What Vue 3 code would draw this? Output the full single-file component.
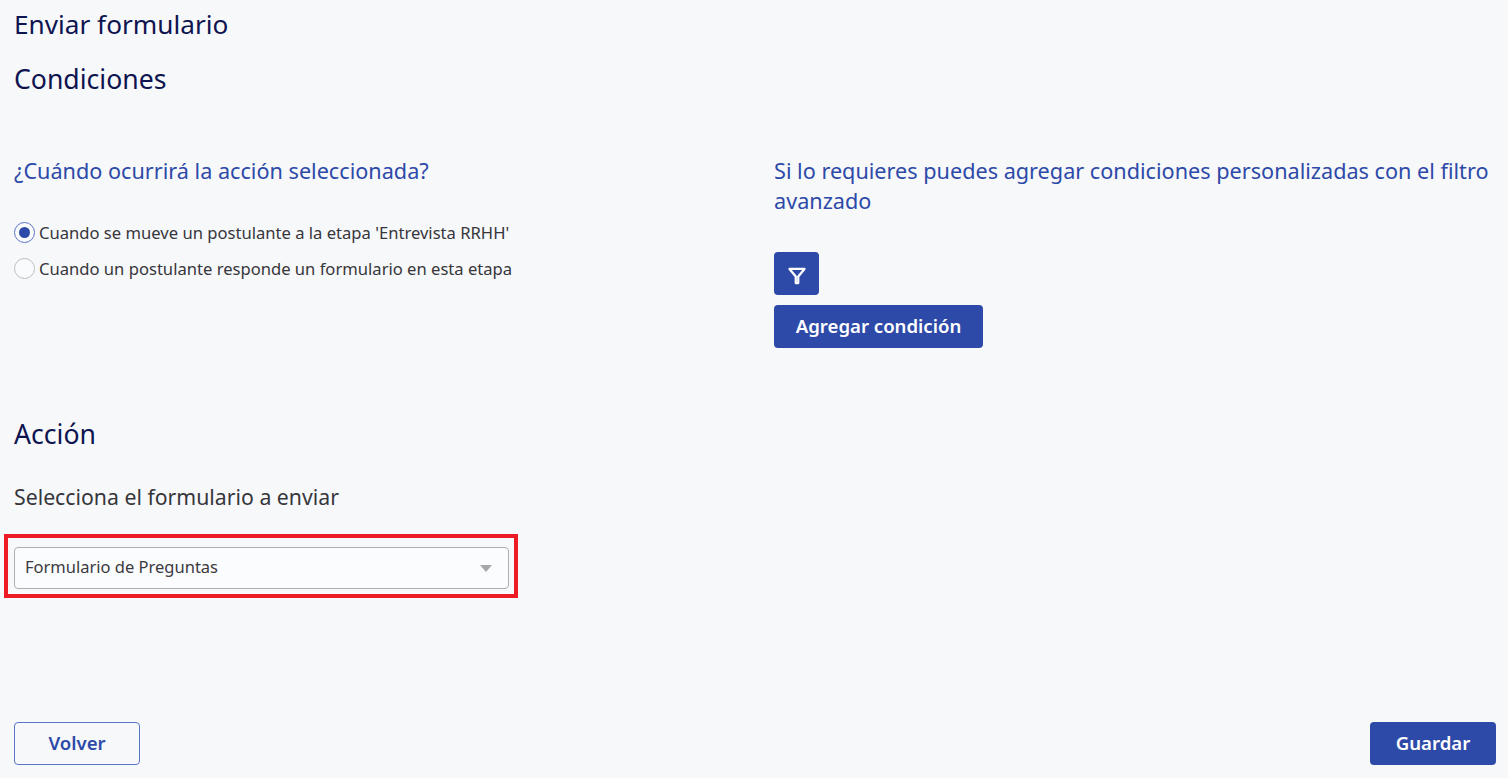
<script setup>
import { ref } from 'vue'

const selected = ref('etapa')

const options = [
  { id: 'etapa', label: "Cuando se mueve un postulante a la etapa 'Entrevista RRHH'" },
  { id: 'form', label: 'Cuando un postulante responde un formulario en esta etapa' },
]
</script>

<template>
  <div class="page">
    <h1 class="title">Enviar formulario</h1>
    <h2 class="section first">Condiciones</h2>

    <div class="columns">
      <div class="col">
        <h3 class="question">¿Cuándo ocurrirá la acción seleccionada?</h3>
        <div class="radios">
          <label v-for="opt in options" :key="opt.id" class="radio">
            <span class="dot" :class="{ on: selected === opt.id }"></span>
            <span>{{ opt.label }}</span>
          </label>
        </div>
      </div>
      <div class="col">
        <h3 class="question">Si lo requieres puedes agregar condiciones personalizadas con el filtro avanzado</h3>
        <button class="btn icon-btn" title="Filtro">
          <svg width="20" height="20" viewBox="0 0 24 24" fill="none" stroke="#fff" stroke-width="2.7" stroke-linejoin="round" stroke-linecap="round">
            <path d="M3 3.500h18l-7.500 9v8h-3v-8z" />
          </svg>
        </button>
        <button class="btn solid add">Agregar condición</button>
      </div>
    </div>

    <h2 class="section action">Acción</h2>
    <p class="pick">Selecciona el formulario a enviar</p>

    <div class="highlight">
      <div class="select">
        <span>Formulario de Preguntas</span>
        <span class="caret"></span>
      </div>
    </div>

    <div class="footer">
      <button class="btn outline wide">Volver</button>
      <button class="btn solid wide">Guardar</button>
    </div>
  </div>
</template>

<style>
body {
  background: #f7f8fa;
}
</style>

<style scoped>
.page {
  min-height: 778px;
  box-sizing: border-box;
  display: flex;
  flex-direction: column;
  align-items: flex-start;
  padding: 0 12px 13px 14px;
  font-family: "Noto Sans", "Open Sans", sans-serif;
  background: #f7f8fa;
  color: #36363b;
}

h1, h2, h3, p {
  margin: 0;
  font-weight: 400;
}

.title, .section {
  color: #0e1450;
  line-height: 34px;
}

.title {
  margin-top: 7px;
  font-size: 26.200px;
}

.section {
  font-size: 26.600px;
}

.section.first {
  margin-top: 21px;
}

.columns {
  display: grid;
  grid-template-columns: 760px 1fr;
  width: 100%;
  margin-top: 60px;
}

.question {
  color: #2d4aa8;
  font-size: 21.650px;
  line-height: 30px;
}

.radios {
  margin-top: 36px;
  display: flex;
  flex-direction: column;
  gap: 15px;
}

.radio {
  display: flex;
  align-items: center;
  gap: 4px;
  font-size: 16.600px;
  line-height: 21px;
}

.dot {
  width: 19px;
  height: 19px;
  border: 1px solid #bdbdc2;
  border-radius: 50%;
  background: #fafbfd;
  position: relative;
}

.dot.on {
  border-color: #5a74c8;
}

.dot.on::after {
  content: "";
  position: absolute;
  left: 4px;
  top: 4px;
  width: 11px;
  height: 11px;
  border-radius: 50%;
  background: #2d4aa8;
}

.btn {
  display: block;
  box-sizing: border-box;
  border-radius: 4px;
  border: 1px solid transparent;
  font-family: inherit;
  font-size: 18.600px;
  font-weight: 600;
  line-height: 24px;
  padding: 0 0 2px;
}

.solid {
  background: #2d4aa8;
  color: #fff;
}

.icon-btn {
  margin-top: 36px;
  width: 45px;
  height: 43px;
  background: #2d4aa8;
  display: flex;
  align-items: center;
  justify-content: center;
  padding: 4px 0 0;
}

.add {
  margin-top: 10px;
  width: 209px;
  height: 43px;
}

.section.action {
  margin-top: 69px;
}

.pick {
  margin-top: 31px;
  font-size: 21.250px;
  line-height: 30px;
}

.highlight {
  box-sizing: border-box;
  margin: 22px 0 0 -10px;
  width: 514px;
  height: 64px;
  border: 4px solid #ed1c24;
  padding: 9px 6px 0;
}

.select {
  box-sizing: border-box;
  width: 495px;
  height: 42px;
  border: 1px solid #aeaeb3;
  border-radius: 4px;
  background: #fbfcfe;
  display: flex;
  align-items: center;
  justify-content: space-between;
  padding: 0 16px 3px 10px;
  font-size: 16.500px;
  color: #3a3a40;
}

.caret {
  width: 0;
  height: 0;
  margin-top: 3px;
  border-left: 6.500px solid transparent;
  border-right: 6.500px solid transparent;
  border-top: 7px solid #a6a6ab;
}

.footer {
  margin-top: auto;
  width: 100%;
  display: flex;
  justify-content: space-between;
}

.wide {
  width: 126px;
  height: 43px;
}

.outline {
  background: transparent;
  border-color: #5a74c8;
  color: #2d4aa8;
}
</style>
